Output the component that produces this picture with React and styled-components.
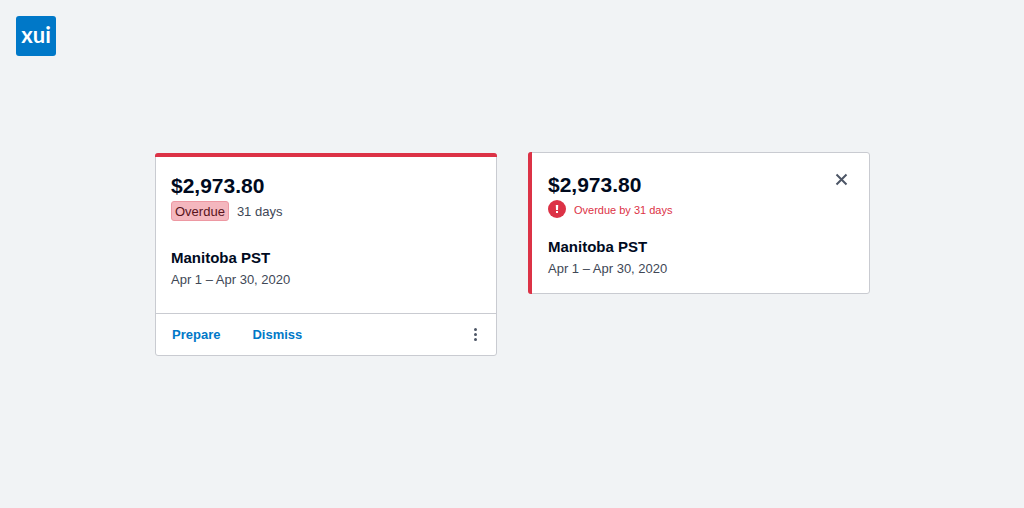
import React from "react";
import styled, { createGlobalStyle } from "styled-components";

const GlobalStyle = createGlobalStyle`
  *, *::before, *::after { box-sizing: border-box; }
  body {
    margin: 0;
    min-height: 100vh;
    background: #f1f3f5;
    color: #000a1e;
    font-family: "Liberation Sans", Arial, sans-serif;
    font-size: 13px;
    line-height: 20px;
  }
`;

const Header = styled.header`
  padding: 16px;
`;

const Logo = styled.a`
  display: flex;
  justify-content: center;
  width: 40px;
  height: 40px;
  border-radius: 3px;
  background: #0078c8;
  color: #fff;
  font-family: Lato, "Open Sans", sans-serif;
  font-size: 22px;
  font-weight: 700;
  line-height: 38px;
  text-decoration: none;
`;

const Main = styled.main`
  display: grid;
  grid-template-columns: repeat(auto-fit, minmax(280px, 1fr));
  align-items: start;
  gap: 31px;
  max-width: 716px;
  margin: 0 auto;
  padding: 80px 0 80px 1px;
`;

const Card = styled.article`
  position: relative;
  border: 1px solid #c9cbd1;
  border-radius: 3px;
  background: #fff;
`;

const TopCard = styled(Card)`
  margin-top: 1px;

  &::before {
    content: "";
    position: absolute;
    inset: -1px -1px auto;
    height: 4px;
    border-radius: 3px 3px 0 0;
    background: #dc3246;
  }
`;

const SideCard = styled(Card)`
  display: flex;
  justify-content: space-between;
  align-items: flex-start;
  padding: 20px 12px 14px 19px;

  &::before {
    content: "";
    position: absolute;
    inset: -1px auto -1px -1px;
    width: 4px;
    border-radius: 3px 0 0 3px;
    background: #dc3246;
  }
`;

const CardBody = styled.div`
  padding: 20px 15px 23px;
`;

const Amount = styled.p`
  margin: 0;
  font-size: 21px;
  font-weight: 700;
  line-height: 24px;
`;

const Status = styled.div`
  display: flex;
  align-items: center;
  gap: 8px;
  margin: ${(p) => (p.$alert ? "2px 0 16px" : "3px 0 25px")};
  color: ${(p) => (p.$alert ? "#dc3246" : "#404756")};
  font-size: ${(p) => (p.$alert ? "11px" : "13px")};
`;

const StatusText = styled.span`
  padding-top: 2px;
  line-height: 18px;
`;

const Tag = styled.span`
  padding: 1px 3px 0;
  border: 1px solid #ed98a2;
  border-radius: 3px;
  background: #f4b7be;
  color: #58141c;
  line-height: 17px;
`;

const Title = styled.h2`
  margin: 0;
  font-size: 15px;
  font-weight: 700;
  line-height: 24px;
`;

const Period = styled.p`
  margin: 0;
  color: #404756;
`;

const Footer = styled.footer`
  display: flex;
  align-items: center;
  gap: 32px;
  height: 42px;
  padding: 0 5px 0 16px;
  border-top: 1px solid #c9cbd1;
`;

const TextButton = styled.button`
  padding: 0;
  border: 0;
  background: none;
  color: #0078c8;
  font: inherit;
  font-weight: 700;
  cursor: pointer;
`;

const IconButton = styled.button`
  display: grid;
  place-items: center;
  width: 32px;
  height: 32px;
  padding: 0;
  border: 0;
  background: none;
  color: #4d5666;
  cursor: pointer;

  ${Footer} & { margin-left: auto; }

  svg { display: block; }
`;

const CloseButton = styled(IconButton)`
  margin-top: -10px;
`;

function AlertIcon() {
  return (
    <svg width="18" height="18" viewBox="0 0 18 18" aria-hidden="true">
      <circle cx="9" cy="9" r="9" fill="#dc3246" />
      <path d="M7.8 5h2.4l-.2 5H8zM8 11h2v2H8z" fill="#fff" />
    </svg>
  );
}

export default function App() {
  return (
    <>
      <GlobalStyle />
      <Header>
        <Logo href="#">xui</Logo>
      </Header>
      <Main>
        <TopCard>
          <CardBody>
            <Amount>$2,973.80</Amount>
            <Status>
              <Tag>Overdue</Tag>
              <StatusText>31 days</StatusText>
            </Status>
            <Title>Manitoba PST</Title>
            <Period>Apr 1 – Apr 30, 2020</Period>
          </CardBody>
          <Footer>
            <TextButton type="button">Prepare</TextButton>
            <TextButton type="button">Dismiss</TextButton>
            <IconButton type="button" aria-label="More options">
              <svg width="4" height="14" viewBox="0 0 4 14" fill="currentColor" aria-hidden="true">
                <circle cx="2.5" cy="1.5" r="1.5" />
                <circle cx="2.5" cy="6.5" r="1.5" />
                <circle cx="2.5" cy="11.5" r="1.5" />
              </svg>
            </IconButton>
          </Footer>
        </TopCard>
        <SideCard>
          <div>
            <Amount>$2,973.80</Amount>
            <Status $alert>
              <AlertIcon />
              <StatusText>Overdue by 31 days</StatusText>
            </Status>
            <Title>Manitoba PST</Title>
            <Period>Apr 1 – Apr 30, 2020</Period>
          </div>
          <CloseButton type="button" aria-label="Dismiss">
            <svg width="13" height="13" viewBox="0 0 13 13" fill="none" stroke="currentColor" strokeWidth="2" aria-hidden="true">
              <path d="M1.5 1.5l10 10M11.5 1.5l-10 10" />
            </svg>
          </CloseButton>
        </SideCard>
      </Main>
    </>
  );
}
